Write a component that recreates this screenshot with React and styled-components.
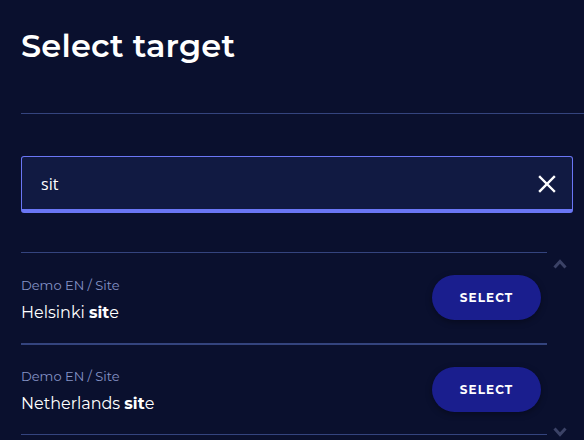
import React, { useState } from "react";
import styled, { createGlobalStyle } from "styled-components";

const colors = {
  bg: "#0a102e",
  field: "#111a42",
  accent: "#6a76f5",
  line: "#34447e",
  muted: "#8593c6",
  button: "#1a1e8e",
  rail: "#3b4266",
};

const targets = [
  { path: "Demo EN / Site", name: "Helsinki site" },
  { path: "Demo EN / Site", name: "Netherlands site" },
];

const Global = createGlobalStyle`
  html, body {
    margin: 0;
    background: ${colors.bg};
    overflow: hidden;
  }
  body {
    font-family: "Montserrat", Inter, "DejaVu Sans", sans-serif;
    color: white;
  }
`;

const highlight = (text, query) => {
  const i = query ? text.toLowerCase().indexOf(query.toLowerCase()) : -1;
  if (i < 0) return text;
  return (
    <>
      {text.slice(0, i)}
      <Match>{text.slice(i, i + query.length)}</Match>
      {text.slice(i + query.length)}
    </>
  );
};

export default function App() {
  const [search, setSearch] = useState("sit");

  return (
    <Layout>
      <Global />
      <Title>Select target</Title>
      <Divider />
      <SearchBox>
        <SearchInput value={search} onChange={(e) => setSearch(e.target.value)} autoFocus />
        <ClearButton onClick={() => setSearch("")} aria-label="Clear">
          <svg width="18" height="18" viewBox="0 0 18 18">
            <path d="M2 2 L16 16 M16 2 L2 16" stroke="white" strokeWidth="2.4" strokeLinecap="square" />
          </svg>
        </ClearButton>
      </SearchBox>
      <ListArea>
        <List>
          {targets.map((t, idx) => (
            <Row key={t.name} $thick={idx > 0}>
              <RowText>
                <PathLabel>{t.path}</PathLabel>
                <Name>{highlight(t.name, search)}</Name>
              </RowText>
              <SelectButton>Select</SelectButton>
            </Row>
          ))}
          <EndLine />
        </List>
        <Rail>
          <svg width="14" height="10" viewBox="0 0 14 10">
            <path d="M1.5 8.5 L7 2.5 L12.5 8.5" fill="none" stroke={colors.rail} strokeWidth="3" />
          </svg>
          <svg width="14" height="10" viewBox="0 0 14 10">
            <path d="M1.5 1.5 L7 7.5 L12.5 1.5" fill="none" stroke={colors.rail} strokeWidth="3" />
          </svg>
        </Rail>
      </ListArea>
    </Layout>
  );
}

const Layout = styled.div`
  width: 584px;
  height: 440px;
  box-sizing: border-box;
  padding: 26px 0 0 21px;
  display: flex;
  flex-direction: column;
`;

const Title = styled.h1`
  margin: 0;
  font-size: 32px;
  font-weight: 600;
  line-height: 40px;
  letter-spacing: 0.2px;
`;

const Divider = styled.div`
  height: 1px;
  background: ${colors.line};
  margin-top: 47px;
`;

const SearchBox = styled.div`
  margin: 42px 11px 0 0;
  height: 57px;
  box-sizing: border-box;
  border: 1px solid ${colors.accent};
  border-bottom-width: 4px;
  border-radius: 3px;
  background: ${colors.field};
  display: flex;
  align-items: center;
  padding: 0 16px 0 19px;
`;

const SearchInput = styled.input`
  flex: 1;
  border: none;
  outline: none;
  background: transparent;
  color: white;
  font-family: "Open Sans", "Noto Sans", sans-serif;
  font-size: 16px;
  padding: 0;
  margin-top: 1px;
  caret-color: white;
`;

const ClearButton = styled.button`
  border: none;
  background: none;
  padding: 0;
  display: flex;
  cursor: pointer;
  margin-top: 1px;
`;

const ListArea = styled.div`
  margin-top: 39px;
  display: flex;
`;

const List = styled.div`
  width: 526px;
`;

const Row = styled.div`
  height: 91px;
  box-sizing: border-box;
  border-top: ${(p) => (p.$thick ? "2px" : "1px")} solid ${colors.line};
  display: flex;
  align-items: center;
  justify-content: space-between;
  padding-right: 6px;
`;

const EndLine = styled.div`
  height: 1px;
  background: ${colors.line};
`;

const RowText = styled.div`
  display: flex;
  flex-direction: column;
  gap: 10px;
  margin-top: 3px;
`;

const PathLabel = styled.div`
  font-size: 13px;
  color: ${colors.muted};
  line-height: 16px;
`;

const Name = styled.div`
  font-size: 16px;
  line-height: 20px;
`;

const Match = styled.b`
  font-weight: 700;
`;

const SelectButton = styled.button`
  width: 109px;
  height: 45px;
  margin-top: -1px;
  border: none;
  border-radius: 23px;
  background: ${colors.button};
  color: white;
  font-family: inherit;
  font-size: 12px;
  font-weight: 700;
  letter-spacing: 1.1px;
  text-transform: uppercase;
  box-shadow: 0 2px 6px rgba(0, 0, 0, 0.35);
  cursor: pointer;
`;

const Rail = styled.div`
  width: 26px;
  height: 178px;
  margin-top: 7px;
  display: flex;
  flex-direction: column;
  justify-content: space-between;
  align-items: center;
`;
